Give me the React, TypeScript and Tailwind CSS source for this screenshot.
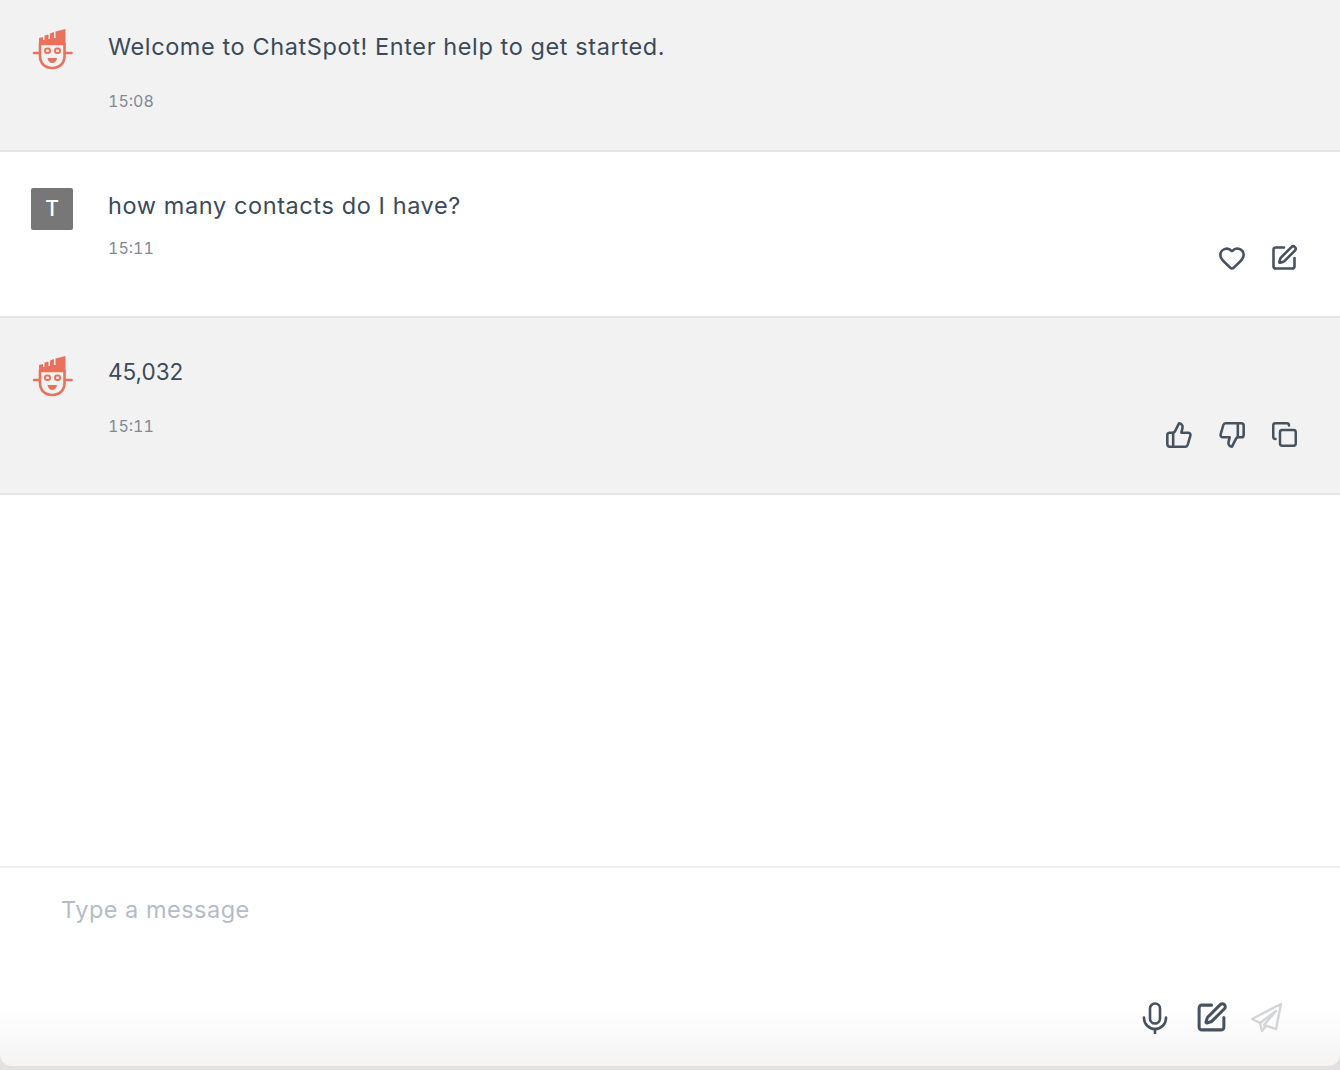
import { Copy, Heart, SquarePen, ThumbsDown, ThumbsUp } from "lucide-react";
import type { ReactNode } from "react";

function BotLogo() {
  return (
    <svg width="42" height="44" viewBox="0 0 42 44" fill="none" className="block">
      <path d="M8 18 V11 L12 10 V13 H13.5 V8.5 L17.5 7.5 V12 H19 V6.5 L23 5 V11 H24.5 V4.5 L34.5 2 V18 Z" fill="#E9725C" />
      <path d="M9 17 H33.5 V29 C33.5 36.5 28.5 41 21.2 41 C14 41 9 36.5 9 29 Z" stroke="#E9725C" strokeWidth="2.6" />
      <path d="M3 26 H8 M35 26 H40.5" stroke="#E9725C" strokeWidth="2.6" strokeLinecap="round" />
      <rect x="14" y="21.5" width="5" height="4.5" rx="2" stroke="#E9725C" strokeWidth="2" />
      <rect x="24" y="21.5" width="5" height="4.5" rx="2" stroke="#E9725C" strokeWidth="2" />
      <path d="M16.5 31 H26 C25.6 34.5 23.5 36 21.2 36 C19 36 17 34.5 16.5 31 Z" fill="#E9725C" />
    </svg>
  );
}

function Microphone() {
  return (
    <svg width="26" height="32" viewBox="0 0 26 32" fill="none" stroke="#46535F" strokeWidth="2.6" strokeLinecap="round">
      <rect x="8" y="1.5" width="10" height="20" rx="5" />
      <path d="M2 15.5 V16 A11 11 0 0 0 24 16 V15.5" />
      <path d="M13 27 V31" />
    </svg>
  );
}

function PaperPlane() {
  return (
    <svg width="34" height="32" viewBox="0 0 34 32" fill="none" stroke="#D4D5D7" strokeWidth="2.4" strokeLinejoin="round" strokeLinecap="round">
      <path d="M31 2 L2 17 L10 21 L26 9 L14 23 L26 27 Z" />
      <path d="M10 21 L12 29 L16 24" />
    </svg>
  );
}

function Row({
  avatar,
  text,
  textClass = "text-[23.5px] tracking-[0.6px]",
  time,
  timeGap,
  actions,
  shaded,
  height,
  textTop,
  avatarTop,
}: {
  avatar: ReactNode;
  text: string;
  textClass?: string;
  time: string;
  timeGap: string;
  actions?: ReactNode;
  shaded?: boolean;
  height: string;
  textTop: string;
  avatarTop: string;
}) {
  return (
    <div className={`flex shrink-0 border-b-2 border-[#E4E5E6] ${height} ${shaded ? "bg-[#F2F2F3]" : "bg-white"}`}>
      <div className={`w-[108px] shrink-0 pl-[31px] ${avatarTop}`}>{avatar}</div>
      <div className={`flex flex-col ${textTop}`}>
        <p className={`leading-[32px] text-[#3A4A5A] ${textClass}`}>{text}</p>
        <p className={`text-[16px] leading-[20px] tabular-nums text-[#7F8A96] ${timeGap}`}>{time}</p>
      </div>
      {actions}
    </div>
  );
}

export default function App() {
  const iconClass = "text-[#46535F]";
  return (
    <div className="flex h-[1070px] w-[1340px] flex-col overflow-hidden bg-white font-['Inter',sans-serif]">
      <Row
        shaded
        height="h-[152px]"
        avatarTop="pt-[27px]"
        textTop="pt-[31px]"
        timeGap="mt-[28px]"
        avatar={<BotLogo />}
        text="Welcome to ChatSpot! Enter help to get started."
        time="15:08"
      />
      <Row
        height="h-[166px]"
        avatarTop="pt-[36px]"
        textTop="pt-[38px]"
        timeGap="mt-[16px]"
        avatar={
          <div className="flex h-[42px] w-[42px] items-center justify-center rounded-[2px] bg-[#777777] text-[21px] font-medium text-white">
            T
          </div>
        }
        text="how many contacts do I have?"
        time="15:11"
        actions={
          <div className="ml-auto mr-[42px] flex items-start gap-[24px] pt-[92px]">
            <Heart size={28} strokeWidth={2.2} className={iconClass} />
            <SquarePen size={28} strokeWidth={2.2} className={iconClass} />
          </div>
        }
      />
      <Row
        shaded
        height="h-[177px]"
        avatarTop="pt-[36px]"
        textTop="pt-[38px]"
        timeGap="mt-[28px]"
        avatar={<BotLogo />}
        text="45,032"
        textClass="text-[22.5px]"
        time="15:11"
        actions={
          <div className="ml-auto mr-[42px] flex items-start gap-[25px] pt-[103px]">
            <ThumbsUp size={28} strokeWidth={2.2} className={iconClass} />
            <ThumbsDown size={28} strokeWidth={2.2} className={iconClass} />
            <Copy size={27} strokeWidth={2.2} className={iconClass} />
          </div>
        }
      />
      <div className="flex-1" />
      <div className="h-[204px] shrink-0 bg-[#E3E2E0] pb-[4px]">
        <div className="flex h-full flex-col rounded-b-[12px] border-t-2 border-[#EEEFF0] bg-gradient-to-b from-white from-70% to-[#F4F4F4]">
          <p className="pl-[61px] pt-[26px] text-[23.5px] leading-[32px] tracking-[0.5px] text-[#B4BCC7]">Type a message</p>
          <div className="ml-auto mr-[56px] mt-[75px] flex items-center">
            <Microphone />
            <SquarePen size={33} strokeWidth={2.2} className={`ml-[27px] ${iconClass}`} />
            <span className="ml-[22px]">
              <PaperPlane />
            </span>
          </div>
        </div>
      </div>
    </div>
  );
}
